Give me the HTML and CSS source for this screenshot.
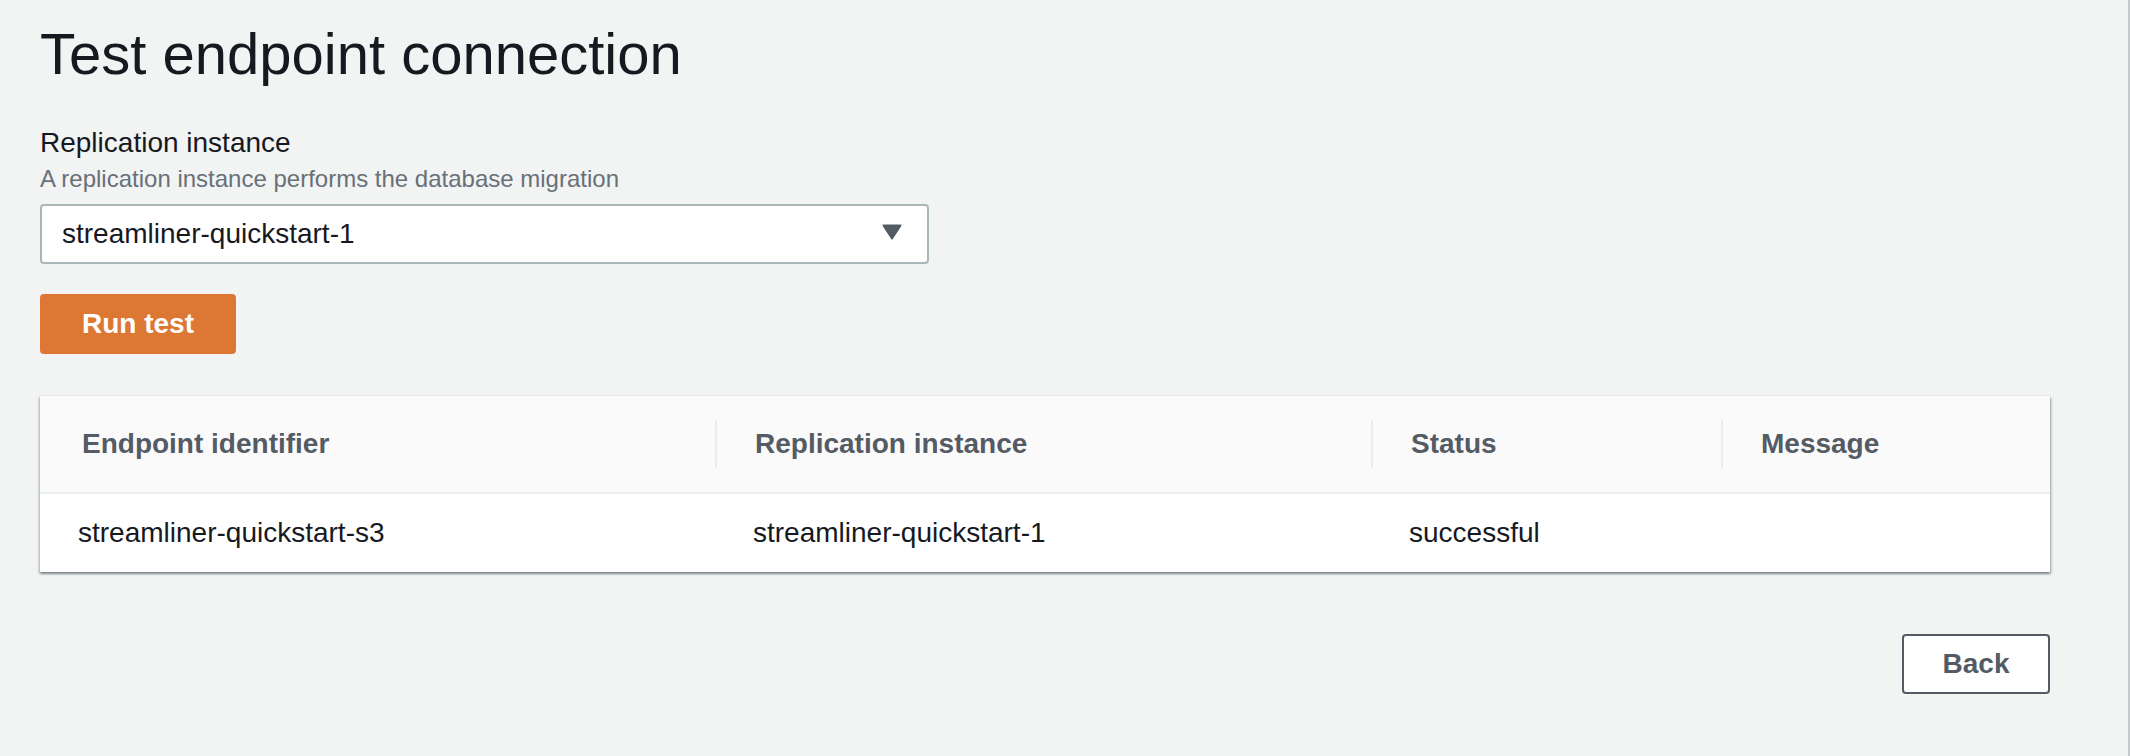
FILE: index.html
```html
<!DOCTYPE html>
<html lang="en">
<head>
<meta charset="utf-8">
<title>Test endpoint connection</title>
<link rel="stylesheet" href="styles.css">
</head>
<body>
<div class="page">
  <h1 class="title">Test endpoint connection</h1>

  <div class="field">
    <div class="field-label">Replication instance</div>
    <div class="field-desc">A replication instance performs the database migration</div>
    <div class="select">
      <span class="select-value">streamliner-quickstart-1</span>
      <svg class="select-caret" width="20" height="16" viewBox="0 0 20 16" aria-hidden="true">
        <path d="M1.5 1.5 H18.5 L10 14.5 Z" fill="#545b64" stroke="#545b64" stroke-width="2" stroke-linejoin="round"/>
      </svg>
    </div>
  </div>

  <button class="btn btn-primary" type="button">Run test</button>

  <div class="table">
    <div class="thead">
      <div class="th"><div class="th-inner first">Endpoint identifier</div></div>
      <div class="th"><div class="th-inner">Replication instance</div></div>
      <div class="th"><div class="th-inner">Status</div></div>
      <div class="th"><div class="th-inner">Message</div></div>
    </div>
    <div class="trow">
      <div class="td">streamliner-quickstart-s3</div>
      <div class="td">streamliner-quickstart-1</div>
      <div class="td">successful</div>
      <div class="td"></div>
    </div>
  </div>

  <div class="actions">
    <button class="btn btn-normal" type="button">Back</button>
  </div>
</div>
</body>
</html>
```

FILE: styles.css
```css
* { box-sizing: border-box; }

html, body {
  margin: 0;
  padding: 0;
  background: #f2f3f3;
}

body {
  min-height: 100vh;
  border-right: 2px solid #c4cacb;
  font-family: "Liberation Sans", Arial, sans-serif;
  color: #16191f;
}

.page {
  width: 2010px;
  margin-left: 40px;
  padding-top: 22px;
}

.title {
  margin: 0;
  font-size: 58px;
  line-height: 64px;
  font-weight: 400;
  color: #16191f;
}

.field {
  margin-top: 37px;
}

.field-label {
  font-size: 28px;
  line-height: 40px;
  color: #16191f;
}

.field-desc {
  font-size: 24px;
  line-height: 32px;
  color: #687078;
}

.select {
  margin-top: 9px;
  width: 889px;
  height: 60px;
  background: #ffffff;
  border: 2px solid #aab7b8;
  border-radius: 4px;
  padding: 0 25px 0 20px;
  display: flex;
  align-items: center;
  justify-content: space-between;
}

.select-value {
  font-size: 28px;
  color: #16191f;
}

.select-caret {
  display: block;
  margin-top: -4px;
}

.btn {
  font-family: "Liberation Sans", Arial, sans-serif;
  font-size: 28px;
  font-weight: 700;
  border-radius: 4px;
  cursor: pointer;
  display: block;
}

.btn-primary {
  margin-top: 30px;
  width: 196px;
  height: 60px;
  background: #dd7834;
  border: 2px solid #dd7834;
  color: #ffffff;
  padding: 0;
}

.table {
  margin-top: 42px;
  width: 2010px;
  background: #ffffff;
  box-shadow: 0 0 0 1px rgba(0, 28, 36, 0.05),
              0 2px 2px 0 rgba(0, 28, 36, 0.3),
              2px 2px 2px 0 rgba(0, 28, 36, 0.15),
              -2px 2px 2px 0 rgba(0, 28, 36, 0.1);
}

.thead, .trow {
  display: grid;
  grid-template-columns: 675px 656px 350px 1fr;
}

.thead {
  background: #fafafa;
  border-bottom: 2px solid #eaeded;
}

.th {
  padding: 24px 0;
}

.th-inner {
  height: 48px;
  display: flex;
  align-items: center;
  border-left: 2px solid #eaeded;
  padding-left: 38px;
  font-size: 28px;
  font-weight: 700;
  color: #545b64;
}

.th-inner.first {
  border-left-color: transparent;
  padding-left: 40px;
}

.td {
  height: 78px;
  display: flex;
  align-items: center;
  padding-left: 38px;
  font-size: 28px;
  color: #16191f;
}

.actions {
  margin-top: 62px;
  display: flex;
  justify-content: flex-end;
}

.btn-normal {
  width: 148px;
  height: 60px;
  background: #ffffff;
  border: 2px solid #545b64;
  color: #545b64;
  padding: 0;
}
```
